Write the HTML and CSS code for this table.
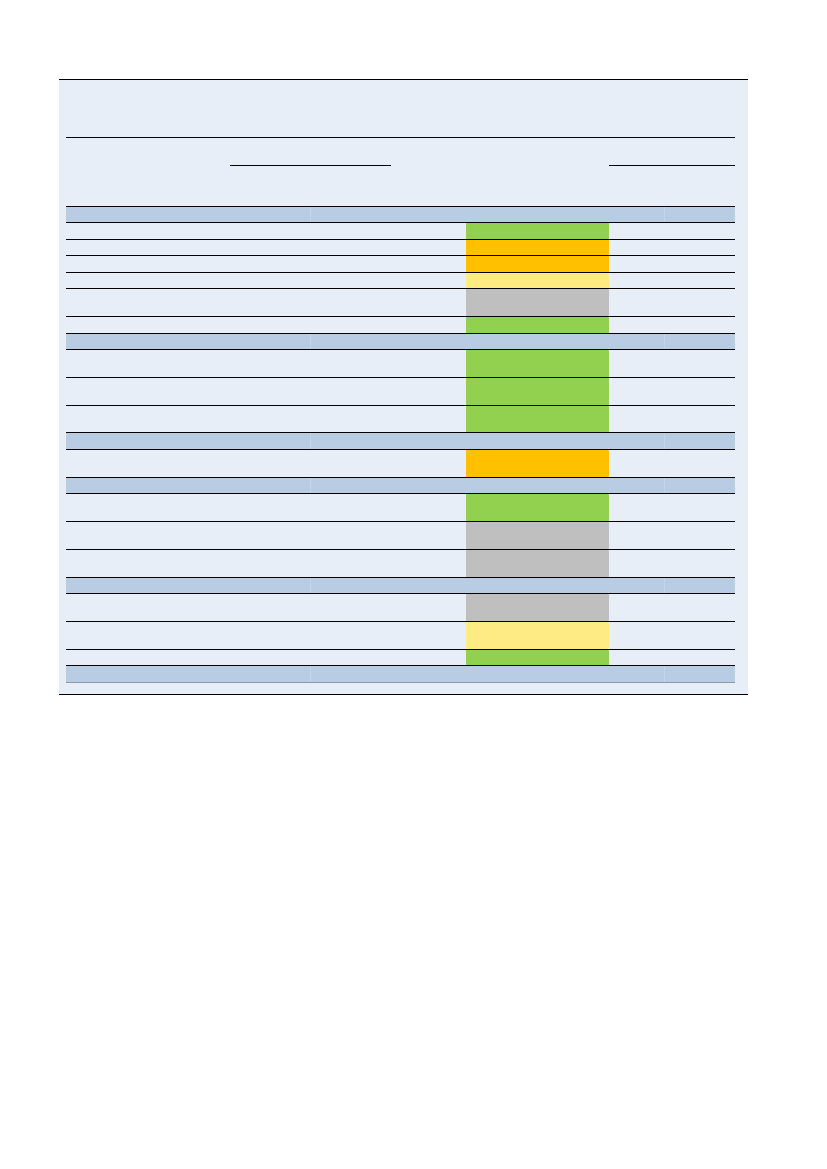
FILE: index.html
```html
<!DOCTYPE html>
<html>
<head>
<meta charset="utf-8">
<link rel="stylesheet" href="styles.css">
</head>
<body>
<div class="panel">
  <div class="head">
    <div class="sublines"><span class="seg seg-a"></span><span class="seg seg-b"></span></div>
  </div>
  <div class="table">
    <div class="band first h15"><div></div><div class="div"></div><div class="div"></div></div>
    <div class="row h16"><div></div><div></div><div class="green"></div><div></div><div></div></div>
    <div class="row h15"><div></div><div></div><div class="orange"></div><div></div><div></div></div>
    <div class="row h16"><div></div><div></div><div class="orange"></div><div></div><div></div></div>
    <div class="row h15"><div></div><div></div><div class="yellow"></div><div></div><div></div></div>
    <div class="row h27"><div></div><div></div><div class="gray"></div><div></div><div></div></div>
    <div class="row h16"><div></div><div></div><div class="green"></div><div></div><div></div></div>
    <div class="band h15"><div></div><div class="div"></div><div class="div"></div></div>
    <div class="row h27"><div></div><div></div><div class="green"></div><div></div><div></div></div>
    <div class="row h27"><div></div><div></div><div class="green"></div><div></div><div></div></div>
    <div class="row h26"><div></div><div></div><div class="green"></div><div></div><div></div></div>
    <div class="band h16"><div></div><div class="div"></div><div class="div"></div></div>
    <div class="row h27"><div></div><div></div><div class="orange"></div><div></div><div></div></div>
    <div class="band h15"><div></div><div class="div"></div><div class="div"></div></div>
    <div class="row h27"><div></div><div></div><div class="green"></div><div></div><div></div></div>
    <div class="row h27"><div></div><div></div><div class="gray"></div><div></div><div></div></div>
    <div class="row h27"><div></div><div></div><div class="gray"></div><div></div><div></div></div>
    <div class="band h15"><div></div><div class="div"></div><div class="div"></div></div>
    <div class="row h27"><div></div><div></div><div class="gray"></div><div></div><div></div></div>
    <div class="row h27"><div></div><div></div><div class="yellow"></div><div></div><div></div></div>
    <div class="row h15"><div></div><div></div><div class="green"></div><div></div><div></div></div>
    <div class="band last h16"><div></div><div class="div"></div><div class="div"></div></div>
  </div>
</div>
</body>
</html>
```
FILE: styles.css
```css
html, body {
  margin: 0;
  padding: 0;
  background: #ffffff;
  font-family: "Liberation Sans", Arial, sans-serif;
}
.panel {
  margin: 79px 0 0 59px;
  width: 689px;
  box-sizing: border-box;
  background: #E7EEF7;
  border-top: 1px solid #000;
  border-bottom: 1px solid #000;
  padding: 57px 13px 11px 7px;
}
.head {
  border-top: 1px solid #000;
  height: 68px;
}
.sublines {
  display: flex;
  justify-content: space-between;
  padding-left: 164px;
  margin-top: 27px;
}
.seg {
  display: block;
  height: 0;
  border-top: 1px solid #000;
}
.seg-a { width: 161px; }
.seg-b { width: 126px; }
.table {
  display: flex;
  flex-direction: column;
}
.row {
  display: grid;
  grid-template-columns: 244px 156px 143px 55px 71px;
  border-bottom: 1px solid #000;
}
.band {
  display: grid;
  grid-template-columns: 244px 354px 71px;
  background: #B8CCE4;
  border-bottom: 1px solid #000;
}
.band.first { border-top: 1px solid #000; }
.band.last { border-bottom-color: #8E98A8; }
.band .div { border-left: 1px solid #C4D4E9; }
.h15 { height: 15px; }
.h16 { height: 16px; }
.h26 { height: 26px; }
.h27 { height: 27px; }
.green { background: #92D050; }
.orange { background: #FFC000; }
.yellow { background: #FFEB84; }
.gray { background: #BFBFBF; }
```
